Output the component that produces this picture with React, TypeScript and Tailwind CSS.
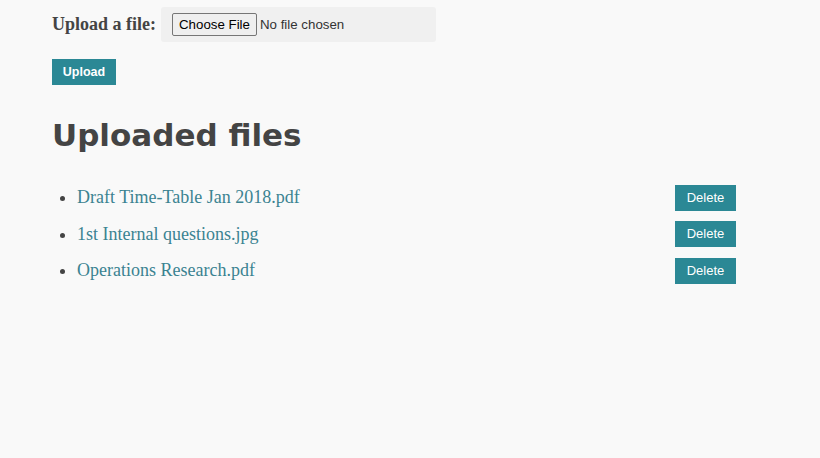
import React from 'react';

const files = ['Draft Time-Table Jan 2018.pdf', '1st Internal questions.jpg', 'Operations Research.pdf'];

export default function App() {
  return (
    <div className="min-h-[458px] w-[820px] bg-[#f9f9f9] px-[52px] pt-[7px]">
      {/* Upload form */}
      <div className="flex items-center gap-[5px]">
        <label className="font-['Liberation_Serif',serif] text-[18px] font-bold text-[#444]">Upload a file:</label>
        <div className="flex h-[35px] w-[275px] items-center rounded-[3px] bg-[#f0f0f0] px-[11px]">
          <input type="file" className="font-['Liberation_Sans',sans-serif] text-[13.3px] text-[#333] file:mr-[3px] file:rounded-[2px] file:border file:border-[#767676] file:bg-[#efefef] file:px-[6px] file:py-[1px] file:text-[13.3px] file:text-black" />
        </div>
      </div>
      <button className="mt-[17px] h-[26px] w-[64px] bg-[#2b8895] font-['Liberation_Sans',sans-serif] text-[12.5px] font-bold text-white">
        Upload
      </button>

      {/* File list */}
      <h1 className="mt-[30px] font-['DejaVu_Sans',sans-serif] text-[31px] font-bold leading-[40px] text-[#444]">Uploaded files</h1>
      <ul className="mt-[29px] w-[684px] list-disc pl-[25px] font-['Liberation_Serif',serif] text-[18px] text-[#3b8391] marker:text-[#444]">
        {files.map((f) => (
          <li key={f} className="mb-[10px]">
            <div className="flex h-[26px] items-center justify-between">
              <a href="#">{f}</a>
              <button className="h-[26px] w-[61px] bg-[#2b8895] font-['Liberation_Sans',sans-serif] text-[13px] text-white">Delete</button>
            </div>
          </li>
        ))}
      </ul>
    </div>
  );
}
